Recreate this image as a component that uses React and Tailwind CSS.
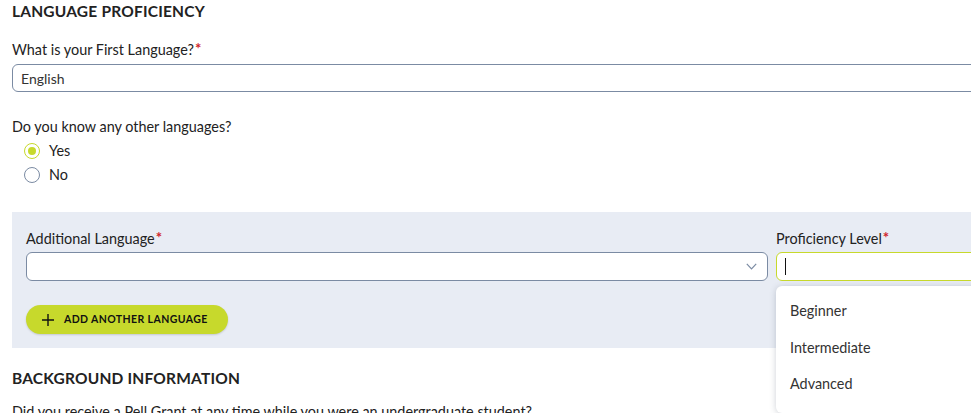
import React from "react";

const font = { fontFamily: "Lato, 'Liberation Sans', sans-serif" };

const levels = ["Beginner", "Intermediate", "Advanced"];

function Required() {
  return <span className="text-[#d0242b] text-[15px] leading-none font-bold align-top relative top-[1px] ml-[1px]">*</span>;
}

function Radio({ checked, label }) {
  return (
    <label className="flex items-center h-6 pl-3 gap-[9px] text-[14.4px] text-[#222]">
      <span
        className={
          "w-4 h-4 rounded-full flex items-center justify-center bg-white border-[1.5px] " +
          (checked ? "border-[#c7d92c]" : "border-[#7b8ba3]")
        }
      >
        {checked && <span className="w-2 h-2 rounded-full bg-[#c7d92c]" />}
      </span>
      {label}
    </label>
  );
}

export default function App() {
  return (
    <div className="w-full h-[413px] overflow-hidden bg-white" style={font}>
      <div className="w-[1544px] px-3 text-[#222]">
        <h2 className="pt-[1px] text-[15.5px] leading-5 font-bold uppercase tracking-[0.2px]">Language Proficiency</h2>

        <div className="mt-[19px] h-5 text-[14.4px] leading-5">
          What is your First Language?
          <Required />
        </div>
        <div className="mt-1 h-7 rounded-md border border-[#7b8ba3] flex items-center px-2 text-[14px] text-[#333]">
          English
        </div>

        <div className="mt-[25px] text-[14.4px] leading-5">Do you know any other languages?</div>
        <div className="mt-[2px] flex flex-col">
          <Radio checked label="Yes" />
          <Radio label="No" />
        </div>

        <div className="mt-[25px] bg-[#e8ecf4] pl-[14px] pr-[14px] pt-[17px] pb-[14px]">
          <div className="grid grid-cols-2 gap-2">
            <div>
              <div className="h-5 text-[14.4px] leading-5">
                Additional Language
                <Required />
              </div>
              <div className="mt-[3px] h-[29px] rounded-md border border-[#7b8ba3] bg-white flex items-center justify-end pr-[10px]">
                <svg width="11" height="7" viewBox="0 0 11 7" fill="none" stroke="#7b8ba3" strokeWidth="1.2">
                  <path d="M0.8 0.8 L5.5 5.8 L10.2 0.8" />
                </svg>
              </div>
            </div>
            <div className="relative">
              <div className="h-5 text-[14.4px] leading-5">
                Proficiency Level
                <Required />
              </div>
              <div className="mt-[3px] h-[29px] rounded-md border-[1.5px] border-[#c7d92c] bg-white flex items-center pl-2">
                <span className="w-[1px] h-[17px] bg-[#111]" />
              </div>
              <div className="absolute left-0 top-[57px] w-full bg-white rounded-md shadow-[0_1px_6px_rgba(60,70,90,0.25)] pt-[7px] pb-[10px] z-10">
                {levels.map((l) => (
                  <div key={l} className="h-[36.5px] flex items-center pl-[14px] text-[14.4px] text-[#333]">
                    {l}
                  </div>
                ))}
              </div>
            </div>
          </div>

          <button className="mt-6 h-[29px] rounded-full bg-[#c7d92c] flex items-center pl-4 pr-[20px] gap-[10px] shadow-[0_1px_2px_rgba(0,0,0,0.15)]">
            <svg width="12" height="12" viewBox="0 0 12 12" stroke="#111" strokeWidth="1.4">
              <path d="M6 0 V12 M0 6 H12" />
            </svg>
            <span className="text-[10.5px] font-bold tracking-[0.4px] text-[#111] uppercase">Add another language</span>
          </button>
        </div>

        <h2 className="mt-5 text-[15.5px] leading-5 font-bold uppercase tracking-[0.2px]">Background Information</h2>
        <div className="mt-[14px] text-[14.4px] leading-5">
          Did you receive a Pell Grant at any time while you were an undergraduate student?
        </div>
      </div>
    </div>
  );
}
